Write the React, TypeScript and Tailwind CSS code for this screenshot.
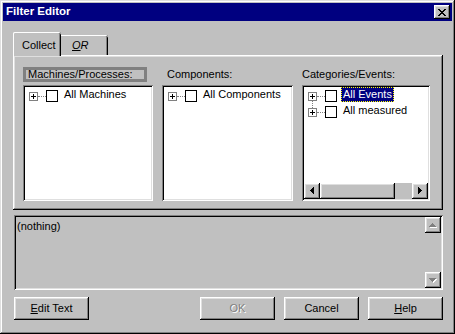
const raised =
  'shadow-[inset_-1px_-1px_0_#000,inset_1px_1px_0_#fff,inset_-2px_-2px_0_#808080,inset_2px_2px_0_#dfdfdf]'
const sunken =
  'shadow-[inset_1px_1px_0_#808080,inset_-1px_-1px_0_#fff,inset_2px_2px_0_#000,inset_-2px_-2px_0_#dfdfdf]'

type Dir = 'up' | 'down' | 'left' | 'right'

// pixel triangles, like the classic scroll arrows
function Tri({ dir, color }: { dir: Dir; color: string }) {
  const rows = [0, 1, 2, 3]
  if (dir === 'up' || dir === 'down') {
    return (
      <g fill={color}>
        {rows.map(i => (
          <rect key={i} x={3 - i} y={dir === 'up' ? i : 3 - i} width={1 + i * 2} height={1} />
        ))}
      </g>
    )
  }
  return (
    <g fill={color}>
      {rows.map(i => (
        <rect key={i} x={dir === 'left' ? i : 3 - i} y={3 - i} width={1} height={1 + i * 2} />
      ))}
    </g>
  )
}

function Arrow({ dir, disabled = false }: { dir: Dir; disabled?: boolean }) {
  const vert = dir === 'up' || dir === 'down'
  const w = vert ? 8 : 5
  const h = vert ? 5 : 8
  return (
    <svg width={w} height={h} viewBox={`0 0 ${w} ${h}`} shapeRendering="crispEdges">
      {disabled && (
        <g transform="translate(1,1)">
          <Tri dir={dir} color="#fff" />
        </g>
      )}
      <Tri dir={dir} color={disabled ? '#808080' : '#000'} />
    </svg>
  )
}

function ScrollBtn({ dir, disabled }: { dir: Dir; disabled?: boolean }) {
  return (
    <div className={`flex h-[16px] w-[16px] shrink-0 items-center justify-center bg-[#c0c0c0] ${raised}`}>
      <Arrow dir={dir} disabled={disabled} />
    </div>
  )
}

function Expander() {
  return (
    <svg width="9" height="9" viewBox="0 0 9 9" shapeRendering="crispEdges" className="mt-[5px] shrink-0">
      <rect x="0.5" y="0.5" width="8" height="8" fill="#fff" stroke="#808080" />
      <path d="M2 4.5h5M4.5 2v5" stroke="#000" />
    </svg>
  )
}

function TreeRow({ label, selected = false, line = false }: { label: string; selected?: boolean; line?: boolean }) {
  return (
    <div className="relative flex h-[16px] items-start pl-[4px]">
      <Expander />
      <div className="mt-[9px] w-[8px] shrink-0 border-t border-dotted border-[#808080]" />
      <div className="mt-[3px] h-[12px] w-[12px] shrink-0 border border-black bg-white" />
      {selected ? (
        <span className="ml-[4px] h-[15px] whitespace-nowrap border border-dotted border-[#ffff00] bg-[#000080] px-[1px] leading-[13px] text-white">
          {label}
        </span>
      ) : (
        <span className="ml-[4px] h-[15px] whitespace-nowrap border border-transparent px-[1px] leading-[13px]">
          {label}
        </span>
      )}
      {line && <div className="absolute left-[8px] top-[14px] h-[7px] border-l border-dotted border-[#808080]" />}
    </div>
  )
}

function Button({ children, disabled = false }: { children: React.ReactNode; disabled?: boolean }) {
  return (
    <div
      className={`flex h-[23px] w-[75px] items-center justify-center bg-[#c0c0c0] ${raised} ${
        disabled ? 'text-[#808080] [text-shadow:1px_1px_0_#fff]' : 'text-black'
      }`}
    >
      {children}
    </div>
  )
}

function CloseGlyph() {
  const px = [
    [0, 0], [1, 0], [6, 0], [7, 0],
    [1, 1], [2, 1], [5, 1], [6, 1],
    [2, 2], [3, 2], [4, 2], [5, 2],
    [3, 3], [4, 3],
    [2, 4], [3, 4], [4, 4], [5, 4],
    [1, 5], [2, 5], [5, 5], [6, 5],
    [0, 6], [1, 6], [6, 6], [7, 6],
  ]
  return (
    <svg width="8" height="7" viewBox="0 0 8 7" shapeRendering="crispEdges">
      {px.map(([x, y]) => (
        <rect key={`${x}-${y}`} x={x} y={y} width="1" height="1" fill="#000" />
      ))}
    </svg>
  )
}

export default function App() {
  return (
    <div
      className={`flex h-[334px] w-[455px] flex-col bg-[#c0c0c0] p-[3px] font-['Liberation_Sans',Arial,sans-serif] text-[11px] text-black shadow-[inset_-1px_-1px_0_#000,inset_1px_1px_0_#dfdfdf,inset_-2px_-2px_0_#808080,inset_2px_2px_0_#fff]`}
    >
      {/* title bar */}
      <div className="flex h-[18px] shrink-0 items-center justify-between bg-[#000080] pl-[3px] pr-[2px]">
        <span className="text-[11.5px] font-bold text-white">Filter Editor</span>
        <div className={`flex h-[14px] w-[16px] items-center justify-center bg-[#c0c0c0] ${raised}`}>
          <CloseGlyph />
        </div>
      </div>

      <div className="flex flex-col pl-[10px] pr-[9px]">
        {/* tabs */}
        <div className="mt-[11px] flex h-[23px] items-start">
          <div className="relative z-10 flex h-[24px] w-[48px] items-start rounded-t-[2px] bg-[#c0c0c0] pl-[9px] pt-[5px] shadow-[inset_1px_0_0_#fff,inset_0_1px_0_#fff,inset_-1px_0_0_#000,inset_-2px_0_0_#808080]">
            Collect
          </div>
          <div className="mt-[3px] flex h-[20px] w-[47px] items-start rounded-tr-[2px] bg-[#c0c0c0] pl-[11px] pt-[2px] shadow-[inset_0_1px_0_#fff,inset_-1px_0_0_#000,inset_-2px_0_0_#808080]">
            <span className="italic">
              <span className="underline">O</span>R
            </span>
          </div>
        </div>

        {/* tab page */}
        <div className={`h-[155px] bg-[#c0c0c0] pl-[10px] pr-[9px] pt-[12px] ${raised}`}>
          <div className="grid grid-cols-[130px_131px_128px] gap-x-[9px]">
            <div className="h-[15px] w-[124px] border-[3px] border-[#808080] pl-[2px] leading-[9px] whitespace-nowrap">
              Machines/Processes:
            </div>
            <div className="h-[15px] pl-[5px] leading-[15px]">Components:</div>
            <div className="h-[15px] leading-[15px]">Categories/Events:</div>

            <div className={`mt-[3px] h-[116px] bg-white p-[2px] ${sunken}`}>
              <TreeRow label="All Machines" />
            </div>
            <div className={`mt-[3px] h-[116px] bg-white p-[2px] ${sunken}`}>
              <TreeRow label="All Components" />
            </div>
            <div className={`mt-[3px] flex h-[116px] flex-col bg-white p-[2px] ${sunken}`}>
              <div className="flex-1">
                <TreeRow label="All Events" selected line />
                <TreeRow label="All measured" />
              </div>
              <div className="flex h-[16px] bg-[#c0c0c0]">
                <ScrollBtn dir="left" />
                <div className={`h-[16px] w-[75px] bg-[#c0c0c0] ${raised}`} />
                <div className="flex-1" />
                <ScrollBtn dir="right" />
              </div>
            </div>
          </div>
        </div>

        {/* description box */}
        <div className={`ml-[1px] mt-[5px] flex h-[75px] bg-[#c0c0c0] p-[2px] ${sunken}`}>
          <div className="flex-1 pl-[1px] pt-[3px] leading-[13px]">(nothing)</div>
          <div className="flex w-[16px] flex-col">
            <ScrollBtn dir="up" disabled />
            <div className="flex-1 bg-[#c0c0c0]" />
            <ScrollBtn dir="down" disabled />
          </div>
        </div>

        {/* buttons */}
        <div className="ml-[1px] mt-[7px] flex gap-[9px]">
          <Button>
            <span>
              <span className="underline">E</span>dit Text
            </span>
          </Button>
          <div className="flex-1" />
          <Button disabled>OK</Button>
          <Button>Cancel</Button>
          <Button>
            <span>
              <span className="underline">H</span>elp
            </span>
          </Button>
        </div>
      </div>
    </div>
  )
}
